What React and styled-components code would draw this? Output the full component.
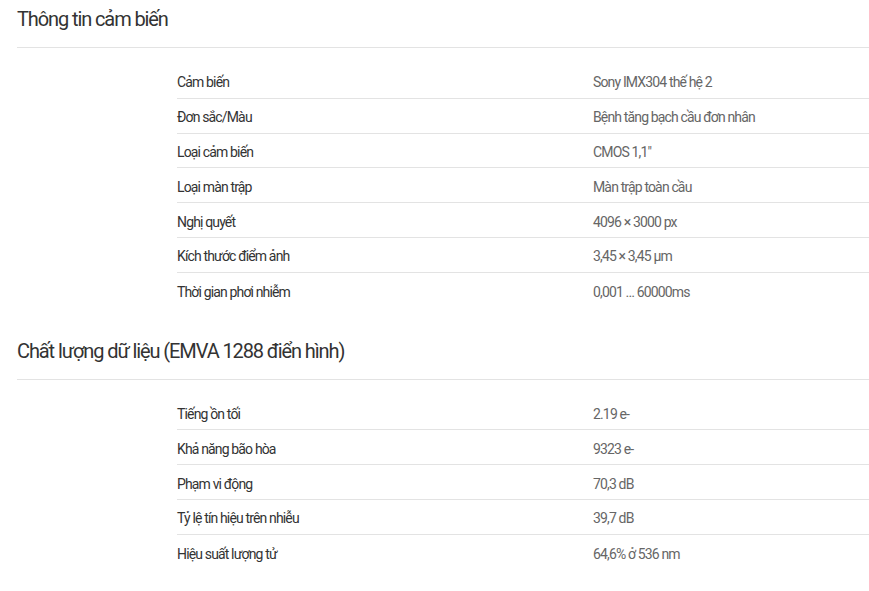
import styled, { createGlobalStyle } from "styled-components";

const GlobalStyle = createGlobalStyle`
  body {
    margin: 0;
    background: #fff;
    font-family: Roboto, "Liberation Sans", sans-serif;
  }
`;

const sections = [
  {
    title: "Thông tin cảm biến",
    rows: [
      ["Cảm biến", "Sony IMX304 thế hệ 2"],
      ["Đơn sắc/Màu", "Bệnh tăng bạch cầu đơn nhân"],
      ["Loại cảm biến", "CMOS 1,1\""],
      ["Loại màn trập", "Màn trập toàn cầu"],
      ["Nghị quyết", "4096 × 3000 px"],
      ["Kích thước điểm ảnh", "3,45 × 3,45 µm"],
      ["Thời gian phơi nhiễm", "0,001 … 60000ms"]
    ]
  },
  {
    title: "Chất lượng dữ liệu (EMVA 1288 điển hình)",
    rows: [
      ["Tiếng ồn tối", "2.19 e-"],
      ["Khả năng bão hòa", "9323 e-"],
      ["Phạm vi động", "70,3 dB"],
      ["Tỷ lệ tín hiệu trên nhiễu", "39,7 dB"],
      ["Hiệu suất lượng tử", "64,6% ở 536 nm"]
    ]
  }
];

const Page = styled.div`
  padding: 0 0 0 17px;
`;

const Section = styled.section`
  margin-bottom: 24px;
`;

const Title = styled.h2`
  margin: 0;
  height: 48px;
  box-sizing: border-box;
  padding-top: 6px;
  font-size: 20px;
  font-weight: 400;
  line-height: 26px;
  color: #333;
  letter-spacing: -1.1px;
  border-bottom: 1px solid #e3e3e3;
`;

const Specs = styled.div`
  display: grid;
  grid-template-columns: 160px 416px 1fr;
  padding-top: 16px;
`;

const Row = styled.div`
  display: contents;

  & > div {
    border-bottom: ${(p) => (p.$last ? "none" : "1px solid #e3e3e3")};
  }
`;

const Spacer = styled.span``;

const Cell = styled.div`
  height: 34.8px;
  box-sizing: border-box;
  padding-top: 3px;
  display: flex;
  align-items: center;
  font-size: 14px;
  letter-spacing: -0.85px;
  color: ${(p) => (p.$value ? "#666" : "#333")};
`;

export default function App() {
  return (
    <Page>
      <GlobalStyle />
      {sections.map((s) => (
        <Section key={s.title}>
          <Title>{s.title}</Title>
          <Specs>
            {s.rows.map(([k, v], i) => (
              <Row key={k} $last={i === s.rows.length - 1}>
                <Spacer />
                <Cell>{k}</Cell>
                <Cell $value>{v}</Cell>
              </Row>
            ))}
          </Specs>
        </Section>
      ))}
    </Page>
  );
}
